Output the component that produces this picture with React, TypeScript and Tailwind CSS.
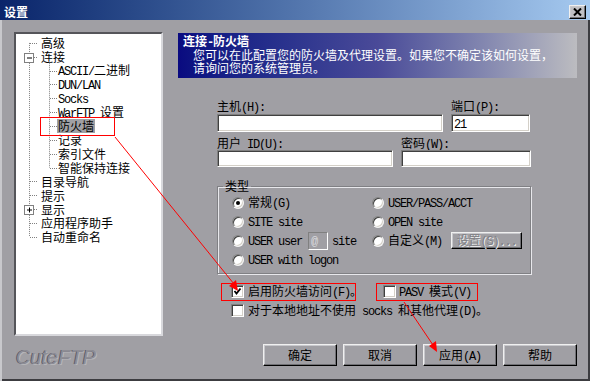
import React from 'react'

// ascii runs get the narrow mono face, the rest stays CJK
function T({ s }: { s: string }) {
  const parts = s.split(/([\x20-\x7e]+)/)
  return (
    <span className="whitespace-pre">
      {parts.map((p, i) =>
        p === '' ? null : /^[\x20-\x7e]+$/.test(p) ? (
          <span key={i} className="font-['Liberation_Mono',monospace] text-[12px] leading-[12px] tracking-[-1.2px]">
            {p}
          </span>
        ) : (
          <span key={i}>{p}</span>
        )
      )}
    </span>
  )
}

const TREE: { t: string; lvl: number; box?: '-' | '+'; sel?: boolean }[] = [
  { t: '高级', lvl: 0 },
  { t: '连接', lvl: 0, box: '-' },
  { t: 'ASCII/二进制', lvl: 1 },
  { t: 'DUN/LAN', lvl: 1 },
  { t: 'Socks', lvl: 1 },
  { t: 'WarFTP 设置', lvl: 1 },
  { t: '防火墙', lvl: 1, sel: true },
  { t: '记录', lvl: 1 },
  { t: '索引文件', lvl: 1 },
  { t: '智能保持连接', lvl: 1 },
  { t: '目录导航', lvl: 0 },
  { t: '提示', lvl: 0 },
  { t: '显示', lvl: 0, box: '+' },
  { t: '应用程序助手', lvl: 0 },
  { t: '自动重命名', lvl: 0 },
]

const ROW = 13.85
const cy = (i: number) => 2 + ROW / 2 + ROW * i

function TreeLines() {
  const dot = { stroke: '#808080', strokeWidth: 1, strokeDasharray: '1 1' }
  return (
    <svg className="absolute left-0 top-0 pointer-events-none" width="145" height="300">
      <line x1="13.5" y1={cy(0)} x2="13.5" y2={cy(14)} {...dot} />
      <line x1="33.5" y1={cy(1) + 6} x2="33.5" y2={cy(9)} {...dot} />
      {TREE.map((r, i) => {
        const y = Math.round(cy(i)) + 0.5
        return r.lvl === 0 ? (
          <line key={i} x1={r.box ? 18 : 14} y1={y} x2="22" y2={y} {...dot} />
        ) : (
          <line key={i} x1="34" y1={y} x2="41" y2={y} {...dot} />
        )
      })}
      {TREE.map((r, i) => {
        if (!r.box) return null
        const y = Math.round(cy(i)) - 4
        return (
          <g key={'b' + i}>
            <rect x="8.5" y={y + 0.5} width="9" height="9" fill="white" stroke="#808080" />
            <line x1="11" y1={y + 5} x2="16" y2={y + 5} stroke="black" />
            {r.box === '+' && <line x1="13.5" y1={y + 2.5} x2="13.5" y2={y + 7.5} stroke="black" />}
          </g>
        )
      })}
    </svg>
  )
}

function Radio({ on }: { on?: boolean }) {
  return (
    <span className="relative inline-block w-[12px] h-[12px] shrink-0 rounded-full bg-white border border-t-[#808080] border-l-[#808080] border-r-[#f2f2f2] border-b-[#f2f2f2] shadow-[inset_1px_1px_0_#404040,inset_-1px_-1px_0_#d4d0c8]">
      {on && <span className="absolute left-[3px] top-[3px] w-[4px] h-[4px] rounded-full bg-black" />}
    </span>
  )
}

function Check({ on }: { on?: boolean }) {
  return (
    <span className="inline-flex items-center justify-center w-[13px] h-[13px] shrink-0 bg-white border border-t-[#808080] border-l-[#808080] border-r-white border-b-white shadow-[inset_1px_1px_0_#404040,inset_-1px_-1px_0_#d4d0c8]">
      {on && (
        <svg width="9" height="9" viewBox="0 0 9 9">
          <polyline points="1.5,4 3.5,6.5 7.5,1.5" fill="none" stroke="black" strokeWidth="1.8" />
        </svg>
      )}
    </span>
  )
}

const sunken =
  'bg-white border border-t-[#808080] border-l-[#808080] border-r-white border-b-white shadow-[inset_1px_1px_0_#404040,inset_-1px_-1px_0_#d4d0c8]'
const raised =
  'border border-t-[#f0f0f0] border-l-[#f0f0f0] border-r-black border-b-black shadow-[inset_-1px_-1px_0_#707074,inset_1px_1px_0_#c8c8cc]'

function Btn({ label }: { label: string }) {
  return (
    <div className={`w-[74px] h-[22px] flex items-center justify-center ${raised}`}>
      <T s={label} />
    </div>
  )
}

export default function App() {
  return (
    <div className="relative w-[590px] h-[381px] overflow-hidden bg-[#a09fa4] font-['Noto_Sans_CJK_SC',sans-serif] text-[12px] leading-[14px] text-black shadow-[inset_2px_0_0_#c8c8cc,inset_-2px_-2px_0_#3c3c40]">
      {/* title bar */}
      <div className="h-[20px] flex bg-linear-to-r from-[#0a246a] to-[#a6caf0]">
        <div className="pl-[4px] pt-[5px] h-[20px] text-white font-bold">设置</div>
        <div className={`ml-auto mr-[4px] mt-[5px] w-[17px] h-[14px] flex items-center justify-center bg-[#c0c0c4] ${raised}`}>
          <svg width="9" height="8" viewBox="0 0 9 8">
            <path d="M1 0.5 L8 7.5 M8 0.5 L1 7.5" stroke="black" strokeWidth="2" />
          </svg>
        </div>
      </div>

      <div className="flex">
        {/* left: tree + logo */}
        <div className="pl-[14px] pt-[12px]">
          <div className="relative w-[149px] h-[304px] bg-white border-2 border-t-[#55555a] border-l-[#55555a] border-r-[#d8d8dc] border-b-[#d8d8dc] pt-[2px] leading-[13px]">
            <TreeLines />
            {TREE.map((r) => (
              <div key={r.t} className="flex items-center h-[13.85px] whitespace-nowrap">
                <span className={`${r.lvl ? 'ml-[41px]' : 'ml-[24px]'} h-[13.5px] flex items-center px-[1px] ${r.sel ? 'bg-[#a0a0a4]' : ''}`}>
                  <T s={r.t} />
                </span>
              </div>
            ))}
          </div>
          <div className="mt-[9px] ml-[2px] h-[24px] font-['Liberation_Sans',sans-serif] italic text-[20px] leading-[24px] text-[#8e8d95] [text-shadow:-1px_0_0_#5c5c68,1px_1px_0_#b6b6ba]">
            CuteFTP
          </div>
        </div>

        {/* right: page */}
        <div className="ml-[15px] pt-[13px]">
          <div className="w-[399px] h-[45px] pt-[2px] bg-linear-to-r from-[#0a0a80] via-[#4a4a98] to-[#bcbcc0] text-white leading-[13px]">
            <div className="pl-[5px] h-[13px] flex items-center font-bold">
              <T s="连接-防火墙" />
            </div>
            <div className="pl-[15px] h-[13px] flex items-center whitespace-nowrap">您可以在此配置您的防火墙及代理设置。如果您不确定该如何设置，</div>
            <div className="pl-[15px] h-[13px] flex items-center">请询问您的系统管理员。</div>
          </div>

          <div className="ml-[39px] w-[360px]">
            <div className="mt-[21px] h-[14px] flex items-center">
              <div className="w-[234px]"><T s="主机(H):" /></div>
              <div><T s="端口(P):" /></div>
            </div>
            <div className="mt-[1px] flex">
              <div className={`w-[226px] h-[18px] ${sunken}`} />
              <div className={`ml-[8px] w-[79px] h-[18px] pl-[2px] flex items-center ${sunken}`}>
                <T s="21" />
              </div>
            </div>
            <div className="mt-[4px] h-[14px] flex items-center">
              <div className="w-[184px]"><T s="用户 ID(U):" /></div>
              <div><T s="密码(W):" /></div>
            </div>
            <div className="flex">
              <div className={`w-[176px] h-[17px] ${sunken}`} />
              <div className={`ml-[8px] w-[130px] h-[17px] ${sunken}`} />
            </div>

            <fieldset className="mt-[12px] w-[314px] border border-[#808084] shadow-[inset_1px_1px_0_#e8e8ec,1px_1px_0_#e8e8ec] pb-[4px]">
              <legend className="ml-[5px] px-[2px] h-[14px] leading-[14px]">类型</legend>
              <div className="grid grid-cols-[140px_1fr] pl-[14px]">
                <div className="h-[19px] flex items-center gap-[4px]"><Radio on /><T s="常规(G)" /></div>
                <div className="h-[19px] flex items-center gap-[4px]"><Radio /><T s="USER/PASS/ACCT" /></div>
                <div className="h-[19px] flex items-center gap-[4px]"><Radio /><T s="SITE site" /></div>
                <div className="h-[19px] flex items-center gap-[4px]"><Radio /><T s="OPEN site" /></div>
                <div className="h-[19px] flex items-center gap-[4px] whitespace-nowrap">
                  <Radio />
                  <T s="USER user" />
                  <div className="ml-[2px] w-[20px] h-[18px] pl-[2px] flex items-center border border-t-[#808080] border-l-[#808080] border-r-white border-b-white text-[#d8d8dc]">
                    <T s="@" />
                  </div>
                  <T s="site" />
                </div>
                <div className="h-[19px] flex items-center gap-[4px] whitespace-nowrap">
                  <Radio />
                  <T s="自定义(M)" />
                  <div className={`ml-[5px] w-[71px] h-[17px] flex items-center justify-center text-[#808084] [text-shadow:1px_1px_0_#f0f0f0] ${raised}`}>
                    <T s="设置(S)..." />
                  </div>
                </div>
                <div className="h-[19px] flex items-center gap-[4px]"><Radio /><T s="USER with logon" /></div>
              </div>
            </fieldset>

            <div className="ml-[14px] mt-[8px]">
              <div className="flex">
                <div className="w-[152px] h-[19px] flex items-center gap-[4px] whitespace-nowrap"><Check on /><T s="启用防火墙访问(F)。" /></div>
                <div className="h-[19px] flex items-center gap-[3px] whitespace-nowrap"><Check /><T s="PASV 模式(V)" /></div>
              </div>
              <div className="h-[19px] flex items-center gap-[4px] whitespace-nowrap"><Check /><T s="对于本地地址不使用 socks 和其他代理(D)。" /></div>
            </div>

            <div className="mt-[24px] flex justify-end gap-[6px]">
              <Btn label="确定" />
              <Btn label="取消" />
              <Btn label="应用(A)" />
              <Btn label="帮助" />
            </div>
          </div>
        </div>
      </div>

      {/* red annotation marks */}
      <svg className="absolute left-0 top-0 pointer-events-none" width="590" height="381">
        <rect x="40.5" y="117.5" width="74" height="18" fill="none" stroke="#ff0000" />
        <rect x="221.5" y="283.5" width="134" height="17" fill="none" stroke="#ff0000" />
        <rect x="376.5" y="283.5" width="101" height="17" fill="none" stroke="#ff0000" />
        <line x1="115" y1="137" x2="234" y2="284" stroke="#ff0000" />
        <polygon points="238,291 229,286 236,280" fill="#ff0000" />
        <line x1="404" y1="302" x2="433" y2="345" stroke="#ff0000" />
        <polygon points="437,352 429,346 436,341" fill="#ff0000" />
      </svg>
    </div>
  )
}
